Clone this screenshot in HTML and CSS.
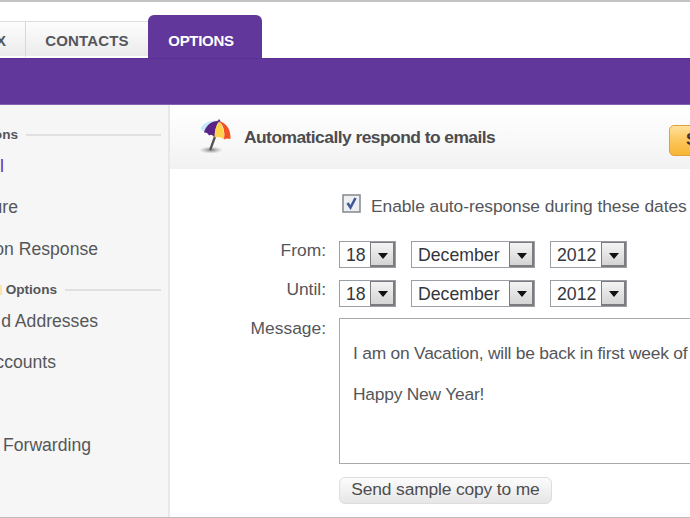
FILE: index.html
```html
<!DOCTYPE html>
<html lang="en">
<head>
<meta charset="utf-8">
<title>Vacation Response</title>
<link rel="stylesheet" href="styles.css">
</head>
<body>
<div class="app">
  <nav class="tabs">
    <div class="tab tab-inbox"><span>X</span></div>
    <div class="tab tab-contacts">CONTACTS</div>
    <div class="tab tab-active">OPTIONS</div>
  </nav>
  <div class="bar"></div>
  <div class="body">
    <aside class="side">
      <div class="group group-first"><span class="clip w18">ons</span><i class="rule"></i></div>
      <div class="item current"><span class="clip w4">l</span></div>
      <div class="item"><span class="clip w18">ure</span></div>
      <div class="item item-last"><span class="clip w98">on Response</span></div>
      <div class="group group-second"><i class="mark"></i><span class="clip w56">Options</span><i class="rule"></i></div>
      <div class="item"><span class="clip w98">d Addresses</span></div>
      <div class="item"><span class="clip w56b">ccounts</span></div>
      <div class="item"></div>
      <div class="item"><span class="clip w91">Forwarding</span></div>
    </aside>
    <main class="main">
      <header class="head">
        <svg class="umbrella" viewBox="0 0 34 36">
          <defs><radialGradient id="sh"><stop offset="0" stop-color="#555" stop-opacity=".8"/><stop offset="1" stop-color="#999" stop-opacity="0"/></radialGradient></defs>
          <ellipse cx="12" cy="31" rx="12" ry="3.6" fill="url(#sh)"/>
          <path d="M1.500 10C4 4 11 1 19 2L7 14Z" fill="#c3e9f8"/>
          <path d="M17 15L11.500 30" stroke="#555" stroke-width="2.3" stroke-linecap="round"/>
          <path d="M20 2C13 1.500 7 6 5 13.500Q8.500 13 10 16.500Q13 14.500 15.500 18.500Q16 9 20 2Z" fill="#5a2387"/>
          <path d="M20 2Q15.500 9 15.500 18.500Q21 17 25 20.500Q26 10 20 2Z" fill="#fcd34a"/>
          <path d="M20 2Q27 9 25 20.500Q28 19 31.500 20C32 11 28 4 20 2Z" fill="#f1521f"/>
          <circle cx="20" cy="2" r="1.4" fill="#68408b"/>
        </svg>
        <h1>Automatically respond to emails</h1>
        <button class="save">Save</button>
      </header>
      <div class="form">
        <label class="enable">
          <svg class="check" viewBox="0 0 19 19"><rect x="1" y="1" width="17" height="17" fill="#eeeff0" stroke="#8a8f95" stroke-width="1.6"/><path d="M5.500 9L8.500 13.500L13.500 4" fill="none" stroke="#3e5a9c" stroke-width="2.6"/></svg>
          <span>Enable auto-response during these dates</span>
        </label>
        <div class="row">
          <span class="label">From:</span>
          <div class="select day"><span>18</span><i class="arrow"></i></div>
          <div class="select month"><span>December</span><i class="arrow"></i></div>
          <div class="select year"><span>2012</span><i class="arrow"></i></div>
        </div>
        <div class="row">
          <span class="label">Until:</span>
          <div class="select day"><span>18</span><i class="arrow"></i></div>
          <div class="select month"><span>December</span><i class="arrow"></i></div>
          <div class="select year"><span>2012</span><i class="arrow"></i></div>
        </div>
        <div class="row message-row">
          <span class="label">Message:</span>
          <div class="message"><p>I am on Vacation, will be back in first week of</p><p>Happy New Year!</p></div>
        </div>
        <button class="sample">Send sample copy to me</button>
      </div>
    </main>
  </div>
</div>
</body>
</html>
```
FILE: styles.css
```css
* { box-sizing: border-box; }
body { margin: 0; overflow: hidden; }
.app {
  width: 690px; height: 518px; overflow: hidden;
  display: flex; flex-direction: column;
  border-top: 2px solid #c3c3c3; border-bottom: 1px solid #bdbdbd;
  background: #fff; color: #55565a;
  font: 17.4px/20px "Liberation Sans", Arial, sans-serif;
  white-space: nowrap;
}
.tabs { height: 56px; flex: none; display: flex; align-items: flex-end; font-size: 15px; font-weight: bold; }
.tab {
  height: 37px; display: flex; align-items: center; justify-content: center;
  border-top: 1px solid #dedede; border-bottom: 2px solid #fff;
  background: linear-gradient(#fdfdfd, #ebebeb); padding-top: 4px;
}
.tab-inbox { width: 26px; border-right: 1px solid #d8d8d8; justify-content: flex-start; }
.tab-inbox span { margin-left: -4px; }
.tab-contacts { width: 122px; letter-spacing: .15px; }
.tab-active {
  width: 114px; height: 43px; padding: 9px 8px 0 0; border: 0;
  border-radius: 6px 6px 0 0; background: #61379b; color: #fff; letter-spacing: -.3px;
}
.bar { height: 47px; flex: none; background: #61379b; border-top: 1px solid #5a3096; border-bottom: 1px solid #8360b0; }
.body { flex: 1; display: flex; min-height: 0; }
.side { width: 170px; flex: none; background: #f6f6f6; border-right: 2px solid #e8e8e8; overflow: hidden; }
.clip { display: flex; justify-content: flex-end; flex: none; }
.w4 { width: 4px; }
.w18 { width: 18px; }
.w56 { width: 57px; }
.w56b { width: 56px; }
.w91 { width: 91px; }
.w98 { width: 98px; }
.group { display: flex; align-items: center; font-size: 13.6px; font-weight: bold; height: 20px; padding-right: 7px; }
.group-first { margin: 20px 0 2px; }
.group-second { position: relative; margin: 10.600px 0 2px; }
.mark { position: absolute; left: 0; top: 5px; width: 2px; height: 10px; background: #fbe4aa; }
.rule { flex: 1; height: 2px; margin-left: 8px; background: #e0e0e0; }
.item { height: 41.4px; padding-top: 10px; font-size: 17.6px; }
.item-last { height: 40.400px; }
.group + .item { margin-top: -1px; }
.current { color: #61379b; }
.main { flex: 1; min-width: 0; overflow: hidden; }
.head {
  height: 64px; display: flex; align-items: center; padding-left: 29px;
  background: linear-gradient(#fff, #f8f8f9 60%, #f1f1f2);
}
.umbrella { width: 34px; height: 36px; flex: none; margin-right: 11px; }
h1 { width: 425px; flex: none; margin: 0; font-size: 17.4px; line-height: 20px; letter-spacing: -.53px; color: #4c4c50; }
.save {
  width: 90px; height: 31px; flex: none; margin-top: 6px; padding: 0 0 0 16px;
  border: 1px solid #dfa03d; border-radius: 5px; background: linear-gradient(#ffe19c, #fbc65c 50%, #f8b536);
  color: #333; font: bold 17px/20px "Liberation Sans", Arial, sans-serif; text-align: left;
}
.form { padding: 25px 0 0 66px; }
.enable { display: flex; height: 47px; padding-left: 106px; }
.check { width: 19px; height: 19px; flex: none; margin-right: 10px; }
.enable span { padding-top: 2px; letter-spacing: -.06px; }
.row { display: flex; height: 38.500px; }
.label { width: 90px; flex: none; text-align: right; margin: -1px 13px 0 0; }
.select { display: flex; height: 27px; border: 1px solid #9b9fa5; margin-right: 15px; color: #35353c; background: #fff; font-size: 17.7px; }
.select span { flex: 1; padding: 3px 0 0 6px; }
.day { width: 57px; }
.month { width: 124px; }
.year { width: 77px; }
.arrow {
  width: 25px; flex: none; display: flex; align-items: center; justify-content: center;
  border: 1px solid #7c7c7e; border-right-width: 2px; border-bottom-width: 2px;
  background: linear-gradient(#f4f4f4, #d4d4d4);
}
.arrow::before { content: ""; margin: 3px 0 0 2px; border: 5px solid transparent; border-top: 6px solid #111; border-bottom: 0; }
.message-row { height: 159px; }
.message { width: 500px; height: 146px; flex: none; border: 1px solid #aaa; padding: 24px 13px; letter-spacing: -.22px; }
.message p { margin: 0 0 21px; }
.message-row .label { margin-top: 0; }
.sample {
  display: block; margin-left: 103px; width: 213px; height: 27px; padding: 0 0 3px;
  border: 1px solid #dedede; border-radius: 6px; background: linear-gradient(#fcfcfc, #e6e6e6);
  color: #4d4d51; font: 17.4px/20px "Liberation Sans", Arial, sans-serif; letter-spacing: -.14px;
}
```
